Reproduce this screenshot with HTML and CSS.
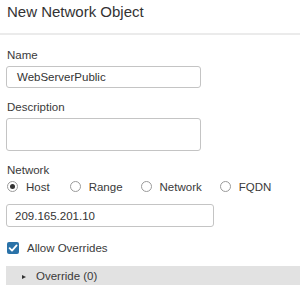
FILE: index.html
```html
<!DOCTYPE html>
<html>
<head>
<meta charset="utf-8">
<link rel="stylesheet" href="styles.css">
</head>
<body>
<div class="dialog">
  <div class="header"><span class="title">New Network Object</span></div>
  <div class="form">
    <div class="field field-name">
      <div class="label">Name</div>
      <div class="input input-name">WebServerPublic</div>
    </div>
    <div class="field field-desc">
      <div class="label">Description</div>
      <div class="input input-desc"></div>
    </div>
    <div class="field field-net">
      <div class="label">Network</div>
      <div class="radios">
        <div class="radio-item first"><span class="radio checked"></span><span class="radio-label">Host</span></div>
        <div class="radio-item"><span class="radio"></span><span class="radio-label">Range</span></div>
        <div class="radio-item"><span class="radio"></span><span class="radio-label">Network</span></div>
        <div class="radio-item"><span class="radio"></span><span class="radio-label">FQDN</span></div>
      </div>
      <div class="input input-ip">209.165.201.10</div>
    </div>
    <div class="check-row">
      <span class="checkbox"><svg width="12" height="12" viewBox="0 0 12 12"><path d="M2.6 6.2 L5 8.6 L9.6 3.4" fill="none" stroke="#fff" stroke-width="1.8" stroke-linecap="round" stroke-linejoin="round"/></svg></span>
      <span class="check-label">Allow Overrides</span>
    </div>
    <div class="override-bar">
      <span class="tri"></span><span class="override-label">Override (0)</span>
    </div>
  </div>
</div>
</body>
</html>
```

FILE: styles.css
```css
html, body {
  margin: 0;
  padding: 0;
  background: #fff;
}
body {
  font-family: "Liberation Sans", Arial, sans-serif;
  color: #3a3a3a;
  width: 300px;
  height: 291px;
  overflow: hidden;
}
.header {
  height: 30px;
  padding: 3px 7px 0;
  border-bottom: 2px solid #ebebeb;
  box-sizing: content-box;
}
.title {
  font-size: 15px;
  line-height: 18px;
  color: #333;
  display: block;
}
.form {
  padding: 0 0 0 6px;
}
.label {
  font-size: 11.5px;
  line-height: 14px;
  padding-left: 1px;
  color: #3a3a3a;
}
.field-name {
  margin-top: 13px;
}
.field-desc {
  margin-top: 12px;
}
.field-net {
  margin-top: 12px;
}
.input {
  box-sizing: border-box;
  border: 1px solid #c4c4c4;
  border-radius: 3px;
  margin-top: 4px;
  font-size: 11.5px;
  color: #333;
  display: flex;
  align-items: center;
}
.input-name {
  width: 195px;
  height: 22px;
  padding-left: 10px;
}
.input-desc {
  width: 195px;
  height: 33px;
}
.input-ip {
  width: 208px;
  height: 23px;
  padding-left: 8px;
  margin-top: 10px;
}
.radios {
  display: flex;
  gap: 18px;
  margin-top: 2px;
  padding-left: 1px;
  height: 15px;
  align-items: center;
}
.radio-item {
  display: flex;
  align-items: center;
}
.radio-item.first {
  margin-right: 2px;
}
.radio {
  box-sizing: border-box;
  width: 11px;
  height: 11px;
  border: 1px solid #9a9a9a;
  border-radius: 50%;
  display: flex;
  align-items: center;
  justify-content: center;
}
.radio.checked::after {
  content: "";
  width: 5px;
  height: 5px;
  border-radius: 50%;
  background: #333;
}
.radio-label {
  font-size: 11.5px;
  line-height: 14px;
  margin-left: 8px;
}
.check-row {
  display: flex;
  align-items: center;
  margin-top: 14px;
  padding-left: 1px;
  height: 13px;
}
.checkbox {
  width: 12px;
  height: 12px;
  border-radius: 2px;
  background: #2a72a8;
  display: flex;
}
.check-label {
  font-size: 11.5px;
  line-height: 14px;
  margin-left: 8px;
}
.override-bar {
  margin-top: 12px;
  height: 19px;
  background: #e2e2e2;
  display: flex;
  align-items: center;
}
.tri {
  width: 0;
  height: 0;
  border-top: 2.5px solid transparent;
  border-bottom: 2.5px solid transparent;
  border-left: 4px solid #333;
  margin-left: 16px;
  margin-top: 2px;
}
.override-label {
  font-size: 11.5px;
  line-height: 14px;
  margin-left: 10px;
  color: #3a3a3a;
}
```
